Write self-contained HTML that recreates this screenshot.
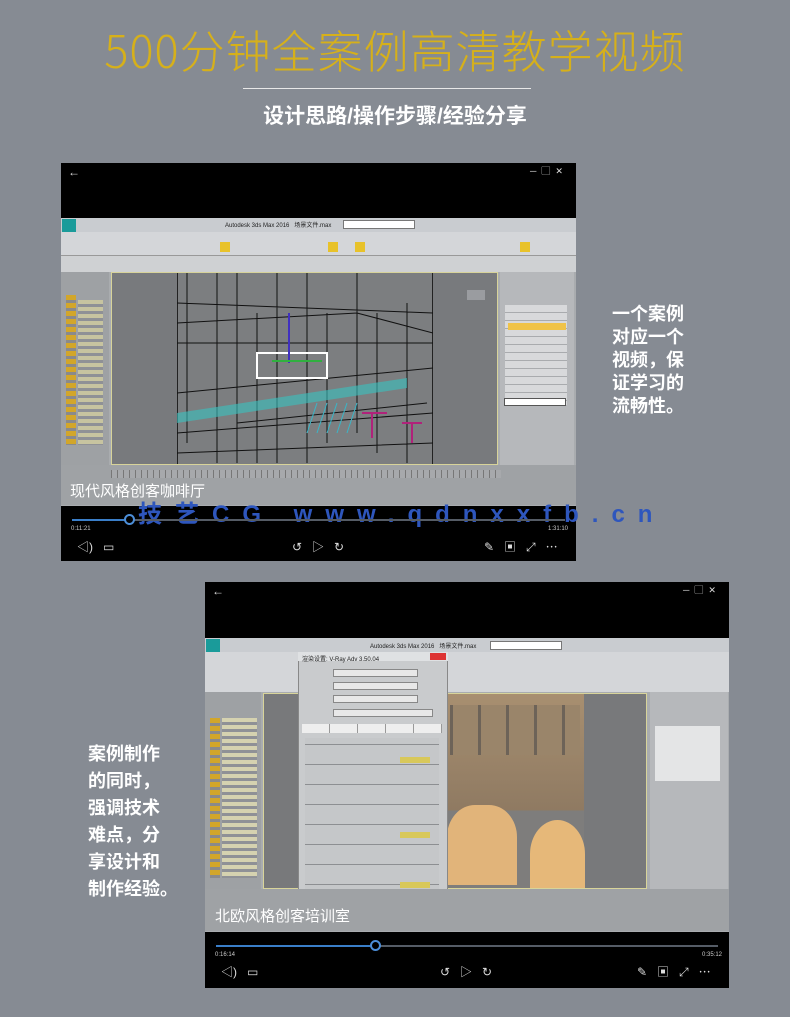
<!DOCTYPE html>
<html><head><meta charset="utf-8"><style>
*{margin:0;padding:0;box-sizing:border-box}
body{width:790px;height:1017px;background:#868b93;position:relative;overflow:hidden;font-family:"Liberation Sans","Noto Sans CJK SC",sans-serif}
.a{position:absolute}
.title{left:0;width:790px;top:16px;text-align:center;color:#d6b01a;font-size:45px;letter-spacing:1px;font-family:"Noto Sans CJK SC","WenQuanYi Zen Hei",sans-serif;font-weight:300}
.side{color:#fff;font-size:18px;font-weight:bold;line-height:23px}
.vid{background:#000}
.win{background:#a9acaf}
.bar{background:#c9ccd0}
.tb{background:#d4d6d9}
.pbar{height:2px;background:#555c66}
.thumb{width:11px;height:11px;border:2px solid #4c8ed8;border-radius:50%;background:#000}
.ico{color:#ddd;font-size:12px}
</style></head><body>
<div class="a title">500分钟全案例高清教学视频</div>
<div class="a" style="left:243px;top:88px;width:288px;height:1px;background:#e8e8e8"></div>
<div class="a" style="left:0;width:790px;top:100px;text-align:center;color:#fff;font-size:21px;font-weight:bold">设计思路/操作步骤/经验分享</div>

<!-- video 1 -->
<div class="a vid" style="left:61px;top:163px;width:515px;height:398px"></div>
<div class="a ico" style="left:68px;top:165px">←</div>
<div class="a ico" style="left:530px;top:164px;font-size:9px">─ &nbsp;▢ &nbsp;✕</div>
<div class="a win" style="left:61px;top:218px;width:515px;height:288px"></div>
<div class="a bar" style="left:61px;top:218px;width:515px;height:14px"></div>
<div class="a" style="left:62px;top:219px;width:14px;height:15px;background:#1a9b9a"></div>
<div class="a" style="left:225px;top:220px;font-size:6px;color:#222">Autodesk 3ds Max 2016 &nbsp; 场景文件.max</div>
<div class="a" style="left:343px;top:220px;width:72px;height:9px;background:#fff;border:1px solid #777"></div>
<div class="a tb" style="left:61px;top:232px;width:515px;height:8px"></div>
<div class="a tb" style="left:61px;top:240px;width:515px;height:16px;border-bottom:1px solid #999"></div>
<div class="a" style="left:220px;top:242px;width:10px;height:10px;background:#e8c22a"></div>
<div class="a" style="left:328px;top:242px;width:10px;height:10px;background:#e8c22a"></div>
<div class="a" style="left:355px;top:242px;width:10px;height:10px;background:#e8c22a"></div>
<div class="a" style="left:520px;top:242px;width:10px;height:10px;background:#e8c22a"></div>
<div class="a tb" style="left:61px;top:256px;width:515px;height:16px;background:#cfd1d3"></div>
<div class="a" style="left:61px;top:272px;width:48px;height:193px;background:#9ea1a4"></div>
<div class="a" style="left:66px;top:295px;width:10px;height:150px;background:repeating-linear-gradient(#d2a62a 0 5px,#8a8a8a 5px 8px)"></div>
<div class="a" style="left:78px;top:300px;width:25px;height:145px;background:repeating-linear-gradient(#c7c4a0 0 4px,#8f9196 4px 7px)"></div>
<div class="a" style="left:111px;top:272px;width:387px;height:193px;background:#787a7d;border:1px solid #d7d39a"></div>
<div class="a" style="left:177px;top:273px;width:256px;height:191px;background:#7c7e80;border-left:1px solid #222;border-right:1px solid #222"></div>
<svg class="a" style="left:177px;top:273px" width="256" height="191"><g stroke="#111" stroke-width="1" fill="none">
<path d="M0 30 L256 40 M0 50 L180 40 L256 60 M0 70 L256 70 M10 0 V170 M40 0 V190 M60 0 V190 M80 40 V190 M100 0 V190 M130 0 V190 M150 40 V170 M180 0 V160 M200 40 V180 M230 30 V190 M0 120 L256 95 M0 160 L256 140 M60 150 L250 130 M0 180 L256 170"/></g>
<path d="M0 140 L230 105 L230 115 L0 150Z" fill="#39c3c0" opacity=".6"/>
<rect x="80" y="80" width="70" height="25" fill="none" stroke="#fff" stroke-width="2"/>
<path d="M112 40 V90" stroke="#4030c0" stroke-width="2"/>
<path d="M95 88 L145 88" stroke="#30b040" stroke-width="2"/>
<g stroke="#3ab6c8"><path d="M130 160 l10 -30 M140 160 l10 -30 M150 160 l10 -30 M160 160 l10 -30 M170 160 l10-30"/></g>
<path d="M185 140 h25 M195 140 v25 M225 150 h20 M235 150 v20" stroke="#b0227a" stroke-width="2"/>
</svg>
<div class="a" style="left:467px;top:290px;width:18px;height:10px;background:#9a9ca0"></div>
<div class="a" style="left:500px;top:272px;width:74px;height:193px;background:#b6b8bb"></div>
<div class="a" style="left:505px;top:305px;width:62px;height:100px;background:repeating-linear-gradient(#d8d9db 0 7px,#a9abae 7px 8px)"></div>
<div class="a" style="left:508px;top:323px;width:58px;height:7px;background:#f0c348"></div>
<div class="a" style="left:504px;top:398px;width:62px;height:8px;background:#fff;border:1px solid #555"></div>
<div class="a" style="left:61px;top:465px;width:515px;height:40px;background:#9fa2a5"></div>
<div class="a" style="left:111px;top:470px;width:390px;height:8px;background:repeating-linear-gradient(90deg,#777 0 1px,#a7a9ac 1px 6px)"></div>
<div class="a" style="left:70px;top:480px;color:#fff;font-size:15px">现代风格创客咖啡厅</div>
<div class="a" style="left:138px;top:494px;color:#2e56bd;font-size:24px;font-weight:bold;letter-spacing:13px;white-space:nowrap">技艺CG www.qdnxxfb.cn</div>
<div class="a pbar" style="left:72px;top:519px;width:493px"></div>
<div class="a" style="left:72px;top:519px;width:57px;height:2px;background:#3a7ec8"></div>
<div class="a thumb" style="left:124px;top:514px"></div>
<div class="a" style="left:71px;top:526px;color:#ccc;font-size:6px">0:11:21</div>
<div class="a" style="left:548px;top:526px;color:#ccc;font-size:6px">1:31:10</div>
<div class="a ico" style="left:77px;top:538px">◁) &nbsp; ▭</div>
<div class="a ico" style="left:292px;top:538px">↺ &nbsp; ▷ &nbsp; ↻</div>
<div class="a ico" style="left:484px;top:538px">✎ &nbsp; ▣ &nbsp; ⤢ &nbsp; ⋯</div>

<div class="a side" style="left:612px;top:303px">一个案例<br>对应一个<br>视频，保<br>证学习的<br>流畅性。</div>

<!-- video 2 -->
<div class="a vid" style="left:205px;top:582px;width:524px;height:406px"></div>
<div class="a ico" style="left:212px;top:584px">←</div>
<div class="a ico" style="left:683px;top:583px;font-size:9px">─ &nbsp;▢ &nbsp;✕</div>
<div class="a win" style="left:205px;top:638px;width:524px;height:294px"></div>
<div class="a bar" style="left:205px;top:638px;width:524px;height:14px"></div>
<div class="a" style="left:206px;top:639px;width:14px;height:15px;background:#1a9b9a"></div>
<div class="a" style="left:370px;top:641px;font-size:6px;color:#222">Autodesk 3ds Max 2016 &nbsp; 场景文件.max</div>
<div class="a" style="left:490px;top:641px;width:72px;height:9px;background:#fff;border:1px solid #777"></div>
<div class="a tb" style="left:205px;top:652px;width:524px;height:40px"></div>
<div class="a" style="left:205px;top:692px;width:56px;height:200px;background:#9ea1a4"></div>
<div class="a" style="left:210px;top:718px;width:10px;height:160px;background:repeating-linear-gradient(#d2a62a 0 5px,#8a8a8a 5px 8px)"></div>
<div class="a" style="left:222px;top:718px;width:35px;height:160px;background:repeating-linear-gradient(#d5d2b0 0 4px,#8f9196 4px 7px)"></div>
<div class="a" style="left:263px;top:693px;width:384px;height:196px;background:#78797b;border:1px solid #d8d49a"></div>
<div class="a" style="left:447px;top:694px;width:137px;height:194px;background:linear-gradient(#a88f70,#8f7a62 60%,#7e7d7c 60%)"></div>
<div class="a" style="left:450px;top:705px;width:130px;height:50px;background:repeating-linear-gradient(90deg,#6d6358 0 3px,#9a856a 3px 28px)"></div>
<div class="a" style="left:447px;top:805px;width:70px;height:80px;border-radius:40% 40% 0 0;background:#e1b47a"></div>
<div class="a" style="left:530px;top:820px;width:55px;height:68px;border-radius:50% 50% 0 0;background:#e6b879"></div>
<div class="a" style="left:650px;top:692px;width:78px;height:200px;background:#b6b8bb"></div>
<div class="a" style="left:655px;top:726px;width:65px;height:55px;background:#e4e5e6"></div>
<div class="a" style="left:298px;top:652px;width:150px;height:253px;background:#c9cbcd;border:1px solid #888"></div>
<div class="a" style="left:298px;top:652px;width:150px;height:9px;background:#dfe1e3"></div>
<div class="a" style="left:302px;top:654px;font-size:6px;color:#222">渲染设置: V-Ray Adv 3.50.04</div>
<div class="a" style="left:430px;top:653px;width:16px;height:7px;background:#d33"></div>
<div class="a" style="left:333px;top:669px;width:85px;height:8px;background:#e8e8e8;border:1px solid #888"></div>
<div class="a" style="left:333px;top:682px;width:85px;height:8px;background:#e8e8e8;border:1px solid #888"></div>
<div class="a" style="left:333px;top:695px;width:85px;height:8px;background:#e8e8e8;border:1px solid #888"></div>
<div class="a" style="left:333px;top:709px;width:100px;height:8px;background:#e8e8e8;border:1px solid #888"></div>
<div class="a" style="left:302px;top:724px;width:140px;height:9px;background:repeating-linear-gradient(90deg,#eee 0 27px,#999 27px 28px)"></div>
<div class="a" style="left:305px;top:738px;width:134px;height:160px;background:repeating-linear-gradient(#c5c7c9 0 6px,#8d8f92 6px 7px,#c5c7c9 7px 20px)"></div>
<div class="a" style="left:400px;top:757px;width:30px;height:6px;background:#d8c85a"></div>
<div class="a" style="left:400px;top:832px;width:30px;height:6px;background:#d8c85a"></div>
<div class="a" style="left:400px;top:882px;width:30px;height:6px;background:#d8c85a"></div>
<div class="a" style="left:205px;top:889px;width:524px;height:42px;background:#9fa2a5"></div>
<div class="a" style="left:215px;top:905px;color:#fff;font-size:15px">北欧风格创客培训室</div>
<div class="a pbar" style="left:216px;top:945px;width:502px"></div>
<div class="a" style="left:216px;top:945px;width:154px;height:2px;background:#3a7ec8"></div>
<div class="a thumb" style="left:370px;top:940px"></div>
<div class="a" style="left:215px;top:952px;color:#ccc;font-size:6px">0:16:14</div>
<div class="a" style="left:702px;top:952px;color:#ccc;font-size:6px">0:35:12</div>
<div class="a ico" style="left:221px;top:963px">◁) &nbsp; ▭</div>
<div class="a ico" style="left:440px;top:963px">↺ &nbsp; ▷ &nbsp; ↻</div>
<div class="a ico" style="left:637px;top:963px">✎ &nbsp; ▣ &nbsp; ⤢ &nbsp; ⋯</div>

<div class="a side" style="left:88px;top:741px;line-height:27px">案例制作<br>的同时，<br>强调技术<br>难点，分<br>享设计和<br>制作经验。</div>
</body></html>
